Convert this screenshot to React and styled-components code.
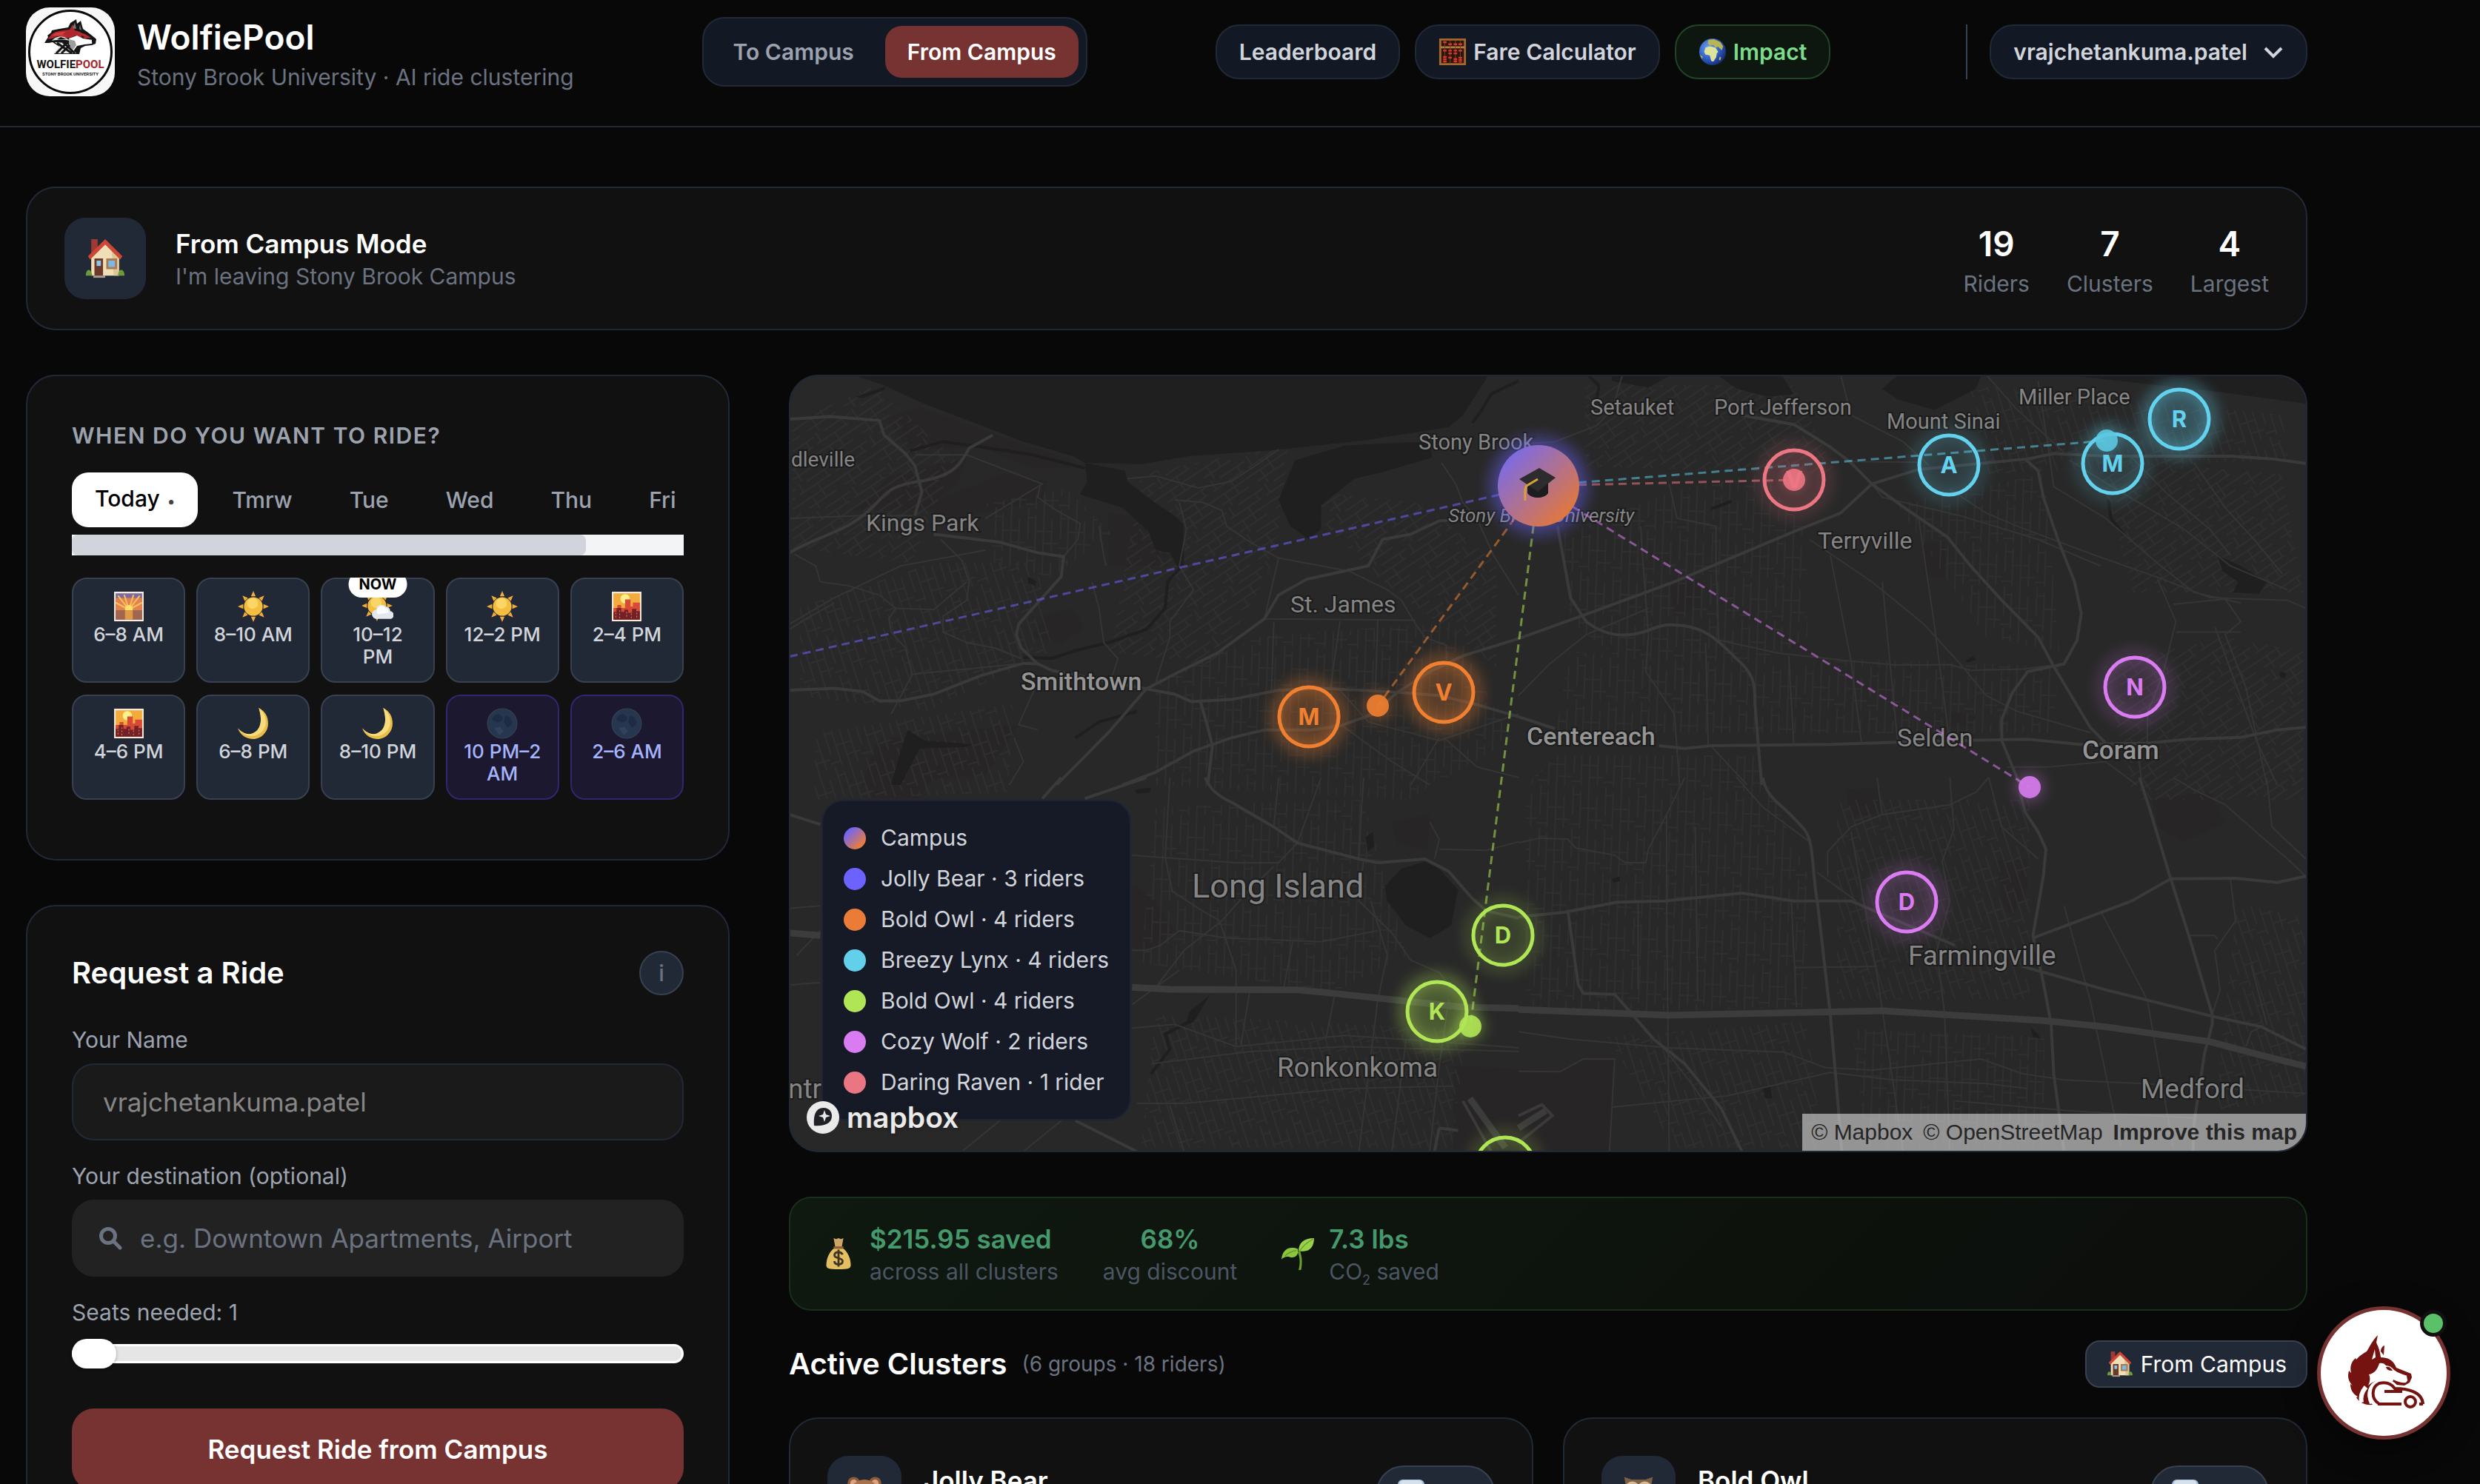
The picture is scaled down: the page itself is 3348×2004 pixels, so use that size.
import React from 'react'
import styled, { createGlobalStyle, css } from 'styled-components'

const GlobalStyle = createGlobalStyle`
	* {
		box-sizing: border-box;
	}
	body {
		margin: 0;
		background: #080808;
		color: #fff;
		font-family: Inter, 'Liberation Sans', sans-serif;
		font-size: 30px;
		line-height: 40px;
	}
	button, input {
		font: inherit;
		color: inherit;
	}
	button {
		cursor: pointer;
	}
	h1, h2, h3, p {
		margin: 0;
		font-size: inherit;
		font-weight: inherit;
	}
`

/* ---------- emoji ---------- */

const EmojiSvg = styled.svg`
	display: block;
	flex: none;
	width: ${props => props.$size}px;
	height: ${props => props.$size}px;
`

const House = () => (
	<>
		<path d="M7 2h6v9l-6 6z" fill="#9c3a33" />
		<path d="M7 18 20 5l13 13v18H7z" fill="#f0dfb6" />
		<path d="M26 12l7 6v18h-5z" fill="#dcc596" />
		<path d="M20 2 4 18l2 3L20 7l14 14 2-3z" fill="#cf4636" />
		<path d="M10 20h8v16h-8z" fill="#6b3a2a" />
		<path d="M12 22h4v5h-4z" fill="#8fc4ea" />
		<path d="M21 20h10v10H21z" fill="#a67b52" />
		<path d="M23 22h6v6h-6z" fill="#7fb6e6" />
		<path d="M2 36c0-7 5-7 6 0zM32 36c0-7 6-7 6 0z" fill="#6c9a3b" />
		<path d="M9 36h11v2H9z" fill="#a89a8c" />
	</>
)

const Abacus = () => (
	<>
		<path d="M1 1h38v38H1z" fill="#2a160c" />
		<path d="M1 1h38v38H1zM4 4v32h32V4z" fill="#a5682c" fillRule="evenodd" />
		<path d="M3 12h34v3H3z" fill="#b87a3a" />
		<path d="M9 4v32M16.500 4v32M24 4v32M31 4v32" stroke="#6e4a30" />
		<path
			d="M9 5v3M16.500 8v3M24 8v3M31 8v3M9 17v3M16.500 17v3M24 17v3M31 17v3M16.500 21v3M24 21v3M9 26v9M31 27v8M16.500 27v3M24 29v6"
			stroke="#e0332a"
			strokeWidth="5"
			strokeDasharray="2.500 0.700"
		/>
	</>
)

const Globe = () => (
	<>
		<defs>
			<radialGradient id="sea" cx=".35" cy=".35" r=".7">
				<stop offset="0" stopColor="#6ea4f2" />
				<stop offset=".6" stopColor="#2e5cc4" />
				<stop offset="1" stopColor="#152c74" />
			</radialGradient>
		</defs>
		<circle cx="20" cy="20" r="19" fill="url(#sea)" />
		<path d="M14 3l8-1 9 4 4 6-2 6-5-5-4 1-3-4-5 1-3-3z" fill="#b9b553" />
		<path d="M10 14l6-2 8 2 4 6-2 2-1 6-4 6-3-1-2-8-6-1-2-4z" fill="#dfe49a" />
		<path d="M30 27l2 1-1 4-2-1zM2 24l4 3-1 3z" fill="#c8b64a" />
	</>
)

const Sunrise = () => (
	<>
		<path d="M1 1h38v38H1z" fill="#f4ecdf" />
		<path d="M3 3h34v34H3z" fill="#7c6a9c" />
		<path d="M3 9h34v16H3z" fill="#e3824a" />
		<path d="M20 24 6 6M20 24 14 5M20 24 26 5M20 24 34 6M20 24 3 15M20 24l17-9" stroke="#f7bf62" strokeWidth="2" />
		<circle cx="20" cy="23" r="5" fill="#ffe169" />
		<path d="M3 25h34v12H3z" fill="#a0664f" />
		<path d="M15 25h10v12H15z" fill="#e09a45" />
	</>
)

const Sun = () => (
	<>
		<path
			d="M20 0l3 7h-6zM20 40l3-7h-6zM0 20l7-3v6zM40 20l-7-3v6zM6 6l7 3-4 4zM34 6l-3 7-4-4zM6 34l3-7 4 4zM34 34l-7-3 4-4z"
			fill="#f3a93a"
		/>
		<circle cx="20" cy="20" r="12" fill="#f5bd3f" />
		<circle cx="19" cy="16" r="7" fill="#fad667" />
	</>
)

const SunCloud = () => (
	<>
		<g transform="translate(-1 -1)">
			<Sun />
		</g>
		<path d="M19 36a6 6 0 0 1-1-12 7 7 0 0 1 12-4 6 6 0 0 1 6 6 5 5 0 0 1-1 10z" fill="#e3e8ee" />
		<path d="M20 30a6 6 0 0 1 10-8 6 6 0 0 1 4 6z" fill="#fafcfd" />
	</>
)

const Sunset = () => (
	<>
		<path d="M1 1h38v38H1z" fill="#f6ead9" />
		<path d="M3 3h34v34H3z" fill="#f3ab3c" />
		<circle cx="18" cy="10" r="6" fill="#fff08a" />
		<path d="M3 22h5v-4h5v4h5V11h7v9h3v-5h9v22H3z" fill="#d84a37" />
		<path d="M3 27h4v-5h6v5h4v-3h5v4h5v-5h6v3h4v11H3z" fill="#73202a" />
		<path d="M6 28v8M11 25v10M20 27v8M26 29v7M33 24v11" stroke="#d9883c" strokeDasharray="2 2" />
	</>
)

const Crescent = () => (
	<>
		<path d="M27 0c8 4 12 11 12 20 0 11-9 20-19 20C11 40 3 35 0 26c5 6 12 9 18 7 10-3 15-14 9-33z" fill="#e8bd4a" />
		<path d="M27 0c6 5 10 12 9 20-1 9-8 15-16 16C12 37 4 33 0 26c5 6 12 9 18 7 10-3 15-14 9-33z" fill="#f6dc7c" />
	</>
)

const NewMoon = () => (
	<>
		<circle cx="20" cy="20" r="19" fill="#26364f" stroke="#39434f" />
		<path d="M8 12c5-6 10-4 12 0s-4 8-8 6-6-2-4-6zM24 10l7 3 2 8-6 4-5-7z" fill="#1d2b44" />
		<path d="M10 26l7-2 5 6-6 5z" fill="#31425f" />
	</>
)

const MoneyBag = () => (
	<>
		<path d="M14 1l3 1 3-1 3 1 3-1-2 11h-8z" fill="#cfa468" />
		<path d="M15 13h10c7 5 10 14 10 21 0 4-3 5-15 5S5 38 5 34c0-7 3-16 10-21z" fill="#e3bf62" />
		<path d="M14 11h12v3H14z" fill="#8d6230" />
		<path
			d="M25 21c-1-2-3-3-5-3-3 0-5 1-5 4 0 4 10 3 10 7 0 3-2 4-5 4s-5-1-5-4M20 15v21"
			fill="none"
			stroke="#3e3423"
			strokeWidth="2.500"
		/>
	</>
)

const Seedling = () => (
	<>
		<path d="M20 18c3 8 3 14 1 22h3c2-9 1-16-1-23z" fill="#6aa02c" />
		<path d="M0 27c1-11 8-17 20-13 2 8-4 12-10 10-4-1-7 0-10 3z" fill="#8cc63f" />
		<path d="M21 17c0-10 6-16 19-16 0 10-5 17-15 16z" fill="#9bd04a" />
		<path d="M22 17c4-6 9-11 17-15M4 23c4-4 8-6 14-7" stroke="#5d9428" fill="none" />
	</>
)

const Bear = () => (
	<>
		<circle cx="8" cy="9" r="7" fill="#8a5a3a" />
		<circle cx="32" cy="9" r="7" fill="#8a5a3a" />
		<circle cx="8" cy="9" r="4" fill="#d9a283" />
		<circle cx="32" cy="9" r="4" fill="#d9a283" />
		<circle cx="20" cy="22" r="17" fill="#a8714a" />
	</>
)

const Owl = () => (
	<>
		<path d="M4 2l8 3h16l8-3-2 12 2 14-6 10H10L4 28l2-14z" fill="#7d5f48" />
		<circle cx="13" cy="15" r="8" fill="#d7b893" />
		<circle cx="27" cy="15" r="8" fill="#d7b893" />
		<circle cx="14" cy="15" r="4" fill="#1c1310" />
		<circle cx="26" cy="15" r="4" fill="#1c1310" />
		<path d="M18 18h4l-2 6z" fill="#e3a53c" />
	</>
)

const Bubble = () => (
	<>
		<rect x="1" y="1" width="38" height="36" rx="7" fill="#a9c0d8" />
		<rect x="4" y="2" width="32" height="12" rx="5" fill="#d5e2ee" />
	</>
)

const drawings = {
	house: House,
	abacus: Abacus,
	globe: Globe,
	sunrise: Sunrise,
	sun: Sun,
	sunCloud: SunCloud,
	sunset: Sunset,
	crescent: Crescent,
	newMoon: NewMoon,
	moneyBag: MoneyBag,
	seedling: Seedling,
	bear: Bear,
	owl: Owl,
	bubble: Bubble,
}

const Emoji = ({ name, size = 38 }) => {
	const Drawing = drawings[name]
	return (
		<EmojiSvg $size={size} viewBox="0 0 40 40" aria-hidden="true">
			<Drawing />
		</EmojiSvg>
	)
}

/* ---------- shell ---------- */

const Page = styled.div`
	height: 100vh;
	overflow: hidden;
`

const Header = styled.header`
	display: flex;
	justify-content: space-between;
	align-items: center;
	padding: 10px 233px 40px 35px;
	border-bottom: 2px solid #222936;
`

const Brand = styled.div`
	display: flex;
	align-items: center;
	gap: 30px;
`

const Logo = styled.svg`
	width: 120px;
	height: 120px;
	border-radius: 32px;
	background: #f7f7f7;
`

const Title = styled.h1`
	font-size: 46px;
	line-height: 68px;
	font-weight: 600;
`

const Muted = styled.p`
	color: ${props => props.$color || '#6b7280'};
	line-height: ${props => props.$line || 40}px;
	white-space: nowrap;
`

const Segment = styled.div`
	display: flex;
	gap: 12px;
	padding: 10px;
	background: #131825;
	border: 2px solid #222936;
	border-radius: 30px;
`

const SegmentButton = styled.button`
	height: 70px;
	padding: 0 30px;
	border: 0;
	border-radius: 22px;
	font-weight: 600;
	background: transparent;
	color: #9ca3af;

	${props =>
		props.$active &&
		css`
			background: #773232;
			color: #fff;
		`};
`

const Nav = styled.nav`
	display: flex;
	gap: 20px;
`

const pill = css`
	display: flex;
	align-items: center;
	gap: 9px;
	border: 2px solid #222936;
	background: #131825;
	color: #d1d5db;
	white-space: nowrap;
`

const NavButton = styled.button`
	${pill};
	height: 74px;
	padding: 0 30px;
	border-radius: 32px;
	font-weight: 600;

	${props =>
		props.$green &&
		css`
			background: #0d170f;
			border-color: #1f4427;
			color: #7bdc8b;
		`};
`

const Account = styled.div`
	display: flex;
	gap: 30px;
	padding-left: 10px;

	&::before {
		content: '';
		width: 2px;
		background: #374151;
	}
`

const Chevron = styled.svg`
	width: 28px;
	height: 28px;
	margin-left: 12px;
	fill: none;
	stroke: currentColor;
	stroke-width: 4;
`

const Main = styled.main`
	display: grid;
	gap: 60px;
	padding: 80px 233px 60px 35px;
`

const card = css`
	background: #111;
	border: 2px solid #222936;
	border-radius: 40px;
`

const ModeCard = styled.section`
	${card};
	display: flex;
	align-items: center;
	gap: 40px;
	padding: 40px 50px;
`

const Tile = styled.div`
	display: flex;
	justify-content: center;
	align-items: center;
	flex: none;
	width: ${props => props.$size}px;
	height: ${props => props.$size}px;
	border-radius: 28px;
	background: #222936;
`

const Name = styled.h3`
	font-size: 35px;
	line-height: 48px;
	font-weight: 600;
	color: ${props => props.$color || '#fff'};
	white-space: nowrap;
`

const Stats = styled.div`
	display: flex;
	gap: 50px;
	margin-left: auto;
	text-align: center;
`

const Columns = styled.div`
	display: grid;
	grid-template-columns: minmax(0, 19fr) minmax(0, 41fr);
	gap: 80px;
	align-items: start;
`

const Stack = styled.div`
	display: grid;
	grid-template-columns: minmax(0, 1fr);
	gap: 60px;
`

const Panel = styled.section`
	${card};
	padding: 60px;
`

/* ---------- schedule ---------- */

const Eyebrow = styled.h2`
	font-weight: 600;
	letter-spacing: 0.05em;
	text-transform: uppercase;
	color: #9ca3af;
	margin-bottom: 30px;
`

const Days = styled.div`
	display: flex;
	gap: 15px;
	overflow: hidden;
`

const Day = styled.button`
	flex: none;
	height: 74px;
	padding: 0 31px;
	border: 0;
	border-radius: 22px;
	font-weight: 500;
	background: transparent;
	color: #9ca3af;

	${props =>
		props.$active &&
		css`
			background: #fff;
			color: #000;
		`};

	small {
		margin-left: 10px;
		font-size: 20px;
		color: #444;
	}
`

const ScrollTrack = styled.div`
	height: 28px;
	margin: 10px 0 30px;
	background: #f3f4f6;
`

const ScrollThumb = styled.div`
	width: 84%;
	height: 100%;
	border-radius: 8px;
	background: #d1d5db;
`

const Slots = styled.div`
	display: grid;
	grid-template-columns: repeat(5, minmax(0, 1fr));
	gap: 16px 15px;
	padding-bottom: 20px;
	overflow: hidden;
`

const Slot = styled.button`
	position: relative;
	display: flex;
	flex-direction: column;
	align-items: center;
	gap: 2px;
	min-height: 142px;
	padding: 16px 20px;
	border: 2px solid #384150;
	border-radius: 20px;
	background: #222936;
	color: #d1d5db;
	font-size: 26px;
	line-height: 30px;
	font-weight: 500;

	${props =>
		props.$night &&
		css`
			background: #1c182f;
			border-color: #2d2870;
			color: #a5b4fc;
		`};
`

const NowBadge = styled.span`
	position: absolute;
	top: -11px;
	left: 50%;
	transform: translateX(-50%);
	padding: 3px 14px;
	border-radius: 18px;
	background: #fff;
	color: #000;
	font-size: 20px;
	font-weight: 700;
`

/* ---------- request form ---------- */

const PanelHead = styled.div`
	display: flex;
	justify-content: space-between;
	align-items: center;
	margin-bottom: 40px;
`

const Heading = styled.h2`
	font-size: 40px;
	line-height: 60px;
	font-weight: 600;
	white-space: nowrap;
`

const InfoButton = styled.button`
	width: 60px;
	height: 60px;
	padding: 0;
	border: 2px solid #384150;
	border-radius: 50%;
	background: #222936;
	color: #6b7280;
	font-weight: 500;
`

const Label = styled.label`
	display: block;
	margin-bottom: 12px;
	color: #9ca3af;
`

const Field = styled.div`
	display: flex;
	align-items: center;
	gap: 24px;
	height: 104px;
	margin-bottom: 28px;
	padding: 0 ${props => (props.$filled ? 34 : 40)}px;
	border: 2px solid ${props => (props.$filled ? '#222' : '#222936')};
	border-radius: 30px;
	background: ${props => (props.$filled ? '#222' : '#1a1a1a')};

	input {
		flex: 1;
		min-width: 0;
		padding: 0;
		border: 0;
		outline: 0;
		background: transparent;
		font-size: 35px;
		color: #868686;
	}
	input::placeholder {
		color: #6b7280;
		opacity: 1;
	}
	svg {
		width: 32px;
		height: 32px;
		fill: none;
		stroke: #6b7280;
		stroke-width: 5;
		stroke-linecap: round;
	}
`

const Range = styled.input`
	appearance: none;
	display: block;
	width: 100%;
	height: 48px;
	margin: 0 0 50px;
	background: transparent;

	&::-webkit-slider-runnable-track {
		height: 26px;
		border: 3px solid #fff;
		border-radius: 13px;
		background: #e5e5e5;
	}
	&::-webkit-slider-thumb {
		appearance: none;
		width: 60px;
		height: 40px;
		margin: -10px 0 0 -3px;
		border-radius: 20px;
		background: #fff;
		box-shadow: 0 1px 4px rgba(0, 0, 0, 0.3);
	}
`

const Submit = styled.button`
	width: 100%;
	height: 110px;
	border: 0;
	border-radius: 30px;
	background: #773232;
	font-size: 35px;
	font-weight: 600;
`

/* ---------- map ---------- */

const MapFrame = styled.section`
	position: relative;
	height: 1050px;
	overflow: hidden;
	border: 2px solid #222936;
	border-radius: 40px;
	background: #282828;
`

const MapSvg = styled.svg`
	display: block;
	width: 100%;
	height: 100%;
	font-family: Roboto, 'Liberation Sans', sans-serif;

	path {
		vector-effect: non-scaling-stroke;
	}
	.road {
		fill: none;
		stroke: #353535;
		stroke-width: 2px;
	}
	.main {
		stroke: #3a3a3a;
		stroke-width: 4px;
	}
	.highway {
		stroke: #3c3c3c;
		stroke-width: 9px;
	}
	.water {
		fill: #1f1f1f;
	}
	.river {
		fill: none;
		stroke: #1f1f1f;
		stroke-width: 4px;
	}
	.park {
		fill: #282526;
	}
	.label {
		paint-order: stroke;
		stroke: #1c1c1c;
		stroke-width: 4px;
		fill: #858585;
	}
	.town {
		fill: #959595;
		font-weight: 500;
	}
`

const Legend = styled.ul`
	position: absolute;
	left: 42px;
	bottom: 41px;
	display: grid;
	gap: 20px;
	margin: 0;
	padding: 32px 28px;
	border: 2px solid #1f2433;
	border-radius: 30px;
	background: #161a26;
	list-style: none;
	line-height: 35px;
	color: #d1d5db;

	li {
		display: flex;
		align-items: center;
		gap: 20px;
	}
`

const Swatch = styled.span`
	width: 30px;
	height: 30px;
	border-radius: 50%;
	background: ${props => props.$color};
`

const MapLogo = styled.div`
	position: absolute;
	left: 21px;
	bottom: 22px;
	display: flex;
	align-items: center;
	gap: 9px;
	font-size: 39px;
	line-height: 44px;
	font-weight: 600;
	color: #eaeaea;
	text-shadow: 0 0 4px #222, 0 0 4px #222;

	svg {
		width: 46px;
		height: 46px;
	}
`

const Attribution = styled.div`
	position: absolute;
	right: 0;
	bottom: 0;
	display: flex;
	gap: 14px;
	height: 50px;
	padding: 0 12px;
	background: rgba(255, 255, 255, 0.5);
	font-family: 'Liberation Sans', sans-serif;
	line-height: 50px;

	a {
		color: #262626;
		text-decoration: none;
		white-space: nowrap;
	}
	a:last-child {
		font-weight: 700;
	}
`

// every quarter of the map is traced on its own tile grid
const tiles = [
	{
		transform: 'translate(1050 500) scale(.6378 .3571)',
		park: [
			'M230 180 300 140 440 230 620 340 620 370 540 370 430 290 280 300Z',
			'M480 390 570 420 560 490 380 560 300 520Z',
			'M160 530 240 400 400 330 380 430 300 530Z',
			'M700 540 770 560 790 660 830 700 820 740 700 740Z',
			'M210 1400 510 1340 440 1530 180 1568Z',
			'M560 930 620 900 650 970 600 1030 540 1010Z',
		],
		water: [
			'M160 0 160 17 230 60 300 120 440 215 520 270 625 325 650 350 770 355 870 325 1060 300 1240 265 1420 215 1450 170 1505 17V0Z',
			'M1095 340 1200 285 1300 275 1380 270 1385 330 1280 385 1220 410 1150 510 1150 600 1125 640 1085 590 1060 490Z',
			'M650 350 735 380 740 420 790 490 840 550 858 580 860 740 845 740 830 690 800 680 785 610 730 520 640 470 655 420Z',
			'M240 1568 260 1440 275 1360 310 1400 410 1415 400 1425 300 1430 260 1568Z',
			'M165 100 230 60 225 75 180 105ZM530 780 548 800 545 815 530 805Z',
		],
		river: [
			'M855 740 825 800 820 900 780 980 700 1030 630 1060 580 1090 520 1085',
			'M280 305 350 270 430 290 540 320 650 370',
			'M630 1390 680 1330 760 1290 M1568 40 1510 90 1490 150 1470 200',
		],
		road: [
			'M555 440 550 480 590 530 640 580 635 640 605 705',
			'M25 560 170 550 285 550 M290 320 400 320 560 430 440 560',
			'M345 640 390 720 405 800 400 870 350 930 350 990 400 1030 460 1050 515 1090',
			'M35 695 80 740 90 800 150 815 215 850 250 900 235 940 240 990 270 1050 285 1150 240 1300',
			'M850 500 865 600 850 740 880 830 830 950 830 1010 800 1180',
			'M840 490 900 500 940 530 950 590 1000 650 1060 710 1150 740 1210 760 1290 830 1320 870 1350 960 1370 1010 1415 1040 1415 1100',
			'M1060 710 1030 940 1350 945 M665 800 680 900 690 1030 720 1090 700 1200',
			'M1190 950 1170 1200 M1270 945 1265 1210 M1050 950 1045 1210',
			'M1405 350 1435 430 1450 500 1480 560 1515 700 1568 850',
			'M680 590 690 700 695 740 M740 410 800 400 890 445 960 420 1020 350 1060 300',
			'M25 960 120 860 260 740 440 680 M250 900 330 905 400 800',
			'M280 1150 400 1130 520 1108 M500 1390 520 1480 490 1568 M550 1360 510 1340 530 1260 550 1180',
			'M1195 1345 1300 1480 1380 1568 M1400 1390 1340 1568 M1410 1390 1480 1500 1568 1540',
			'M1190 1210 1250 1330 1400 1400 1568 1300 M25 980 60 940 120 880',
		],
		main: [
			'M25 690C80 630 130 620 180 550S220 440 300 420 390 340 405 295L455 245',
			'M25 185 110 175 215 190 225 245 270 315 290 360 305 460 290 550',
			'M330 620 400 635 470 650 550 690 605 705 600 780 555 870 510 960 505 1000 515 1050 550 1110 580 1135',
			'M25 1210 120 1203 180 1215 215 1250 260 1250 330 1225 430 1155 520 1108 550 1110',
			'M780 1205 840 1225 875 1253 960 1245 1060 1210 1150 1203 1290 1215 1400 1230 1470 1260 1568 1310',
			'M730 1568 800 1520 880 1440 960 1390 1030 1360 1130 1360 1190 1345 1260 1300 1310 1220 1380 1140 1450 1080 1568 1015',
			'M590 1568 700 1370 780 1205 850 1140 930 1070 1030 940 1060 850 1120 790 1250 740 1280 640 1340 620 1400 570 1480 560',
			'M895 1253 910 1350 920 1420 910 1568 M580 1135 780 1205',
		],
		highway: [],
	},
	{
		transform: 'translate(2050 500) scale(.7015 .3571)',
		park: [
			'M290 800 350 790 350 900 300 930Z',
			'M830 1290 880 1310 870 1350 830 1340Z',
			'M780 650 820 650 820 780 780 780Z',
		],
		water: [
			'M180 0H310L250 65 180 40ZM370 0H500L530 90 480 100 420 70ZM700 70 730 17V0H895L880 70 800 150 730 110Z',
			'M1050 17V0H1530V130L1340 80 1200 50Z',
			'M1345 700 1390 740 1440 800 1425 845 1375 840 1385 800 1355 760Z',
			'M1465 1140 1478 1145 1475 1165 1465 1160ZM860 1100 875 1080 880 1095 865 1105Z',
		],
		river: ['M135 20 155 60 150 110', 'M370 525 410 495 M1135 490 1140 560 1165 620'],
		road: [
			'M0 280 70 270 150 210 180 150 200 17 M640 345 770 348',
			'M830 450 900 540 960 590 1110 700 1240 790 1330 860 1480 870 1515 900',
			'M1000 40 1020 300 1030 440 1130 560 1230 730 1300 840 1390 880',
			'M290 430 305 560 380 590 380 730 385 1020 500 1070 640 1100 730 1115 830 1113 870 1135 970 1130 1050 1110',
			'M1060 340 1150 450 1280 600 1370 740 1480 830',
			'M1230 790 1265 950 1240 1150 1210 1300 1210 1410',
			'M1260 885 1360 865 1390 950 1360 1000 1400 1200 1440 1568 M1265 990 1390 990',
			'M235 590 240 740 250 1000 245 1140 300 1300 310 1568 M360 1030 365 1420 M520 1080 530 1420',
			'M600 700 620 900 640 1100 660 1410 M560 640 680 800 780 960 850 1110 900 1230 960 1290 1100 1370',
			'M700 800 715 1110 730 1410 M770 560 800 960 830 1410 M0 1230 60 1110 130 1000 250 900',
			'M680 430 700 480 850 550 1000 640 1120 740 M1180 330 1250 470 1330 600 1370 700',
			'M1300 350 1360 520 1420 650 1470 770 M1340 970 1420 1400 1460 1568',
			'M370 1420 440 1568 M940 1500 1020 1500 1130 1480 1190 1568 M1190 1410 1200 1568',
			'M620 17 640 170 740 270 790 360 M900 17 960 150 1050 310',
		],
		main: [
			'M0 1015 120 930 300 800 530 610 620 540 680 430 770 375 850 360 980 335 1030 315 1130 325 1370 325 1450 335 1515 352',
			'M75 590 90 750 100 860 130 950Q170 1010 215 1000C260 990 260 960 300 963 370 965 400 1060 430 1110 455 1160 455 1200 455 1260L462 1430 468 1568',
			'M975 335 1000 380 1010 480 1040 650 1070 800 1083 920 1075 1020 1050 1110 980 1140 950 1220 930 1320 930 1400 965 1568',
			'M0 1310 70 1355 M270 1420 320 1430 370 1420 600 1415 780 1403 980 1395 1080 1415 1210 1410 1290 1395 1390 1388 1460 1360 1515 1350',
			'M430 170 530 205 600 290 640 350 680 430 750 530 825 630 870 740 930 870 1000 1010 1030 1120 1100 1350 1130 1410',
		],
		highway: [],
	},
	{
		transform: 'translate(1050 1050) scale(.6378 .3333)',
		park: [
			'M750 430 800 500 840 620 790 700 750 690Z',
			'M1300 180 1380 150 1375 290 1310 270Z',
			'M1430 1170 1568 1180 1568 1515 1430 1515Z',
			'M180 0 330 0 300 85 200 85Z',
		],
		water: [
			'M1320 370 1370 340 1400 370 1440 455 1425 600 1380 650 1330 600 1290 500 1285 440Z',
			'M1245 240 1260 220 1262 280 1248 300ZM755 50 790 40 788 60 760 65ZM870 950 915 880 880 990 865 1000Z',
		],
		river: ['M880 980 820 1040 830 1100 790 1200'],
		road: [
			'M750 315 820 325 970 345 1060 345 1100 265 M820 325 835 460 890 530 935 580 970 780 970 1090',
			'M800 850 860 700 940 580 1000 450 1050 360 M750 920 850 780',
			'M750 700 780 700 810 680 850 620 950 650 1150 665 1270 620',
			'M750 1015 840 1000 970 1090 1200 1045 1400 1070 1568 1095',
			'M790 1160 1000 1110 1200 1090 1568 1110 M760 1320 860 1320 1200 1260 1430 1250',
			'M1240 330 1230 500 1300 630 1340 740 1400 790 1430 860 M1255 500 1290 720 1270 900 1230 1515',
			'M1400 290 1500 295 1568 260 M1380 180 1400 250 1390 330 M1240 0 1235 150 1230 330',
			'M1000 850 980 1090 M1090 665 1070 860 M1180 870 1160 1060 M1330 1060 1300 1515 M830 1330 860 1515',
			'M1420 900 1400 1170 1380 1515 M1060 0 1050 200 M830 0 820 325 M1150 0 1100 265',
			'M25 840 90 830 M25 530 90 520 M40 720 90 620 M520 1515 600 1390 M390 1515 470 1390',
		],
		main: [
			'M905 0Q915 60 960 100L1050 200 1100 265 1230 330 1270 345 1370 330 1420 380 1470 490 1500 540 1568 570',
			'M600 0 560 85 M780 0 650 85 M25 150 90 190 M630 1390 760 1515',
			'M1400 1420 1390 1515 M1400 1420 1440 1430 M1450 1310 1510 1515',
		],
		highway: ['M25 630 90 640 M750 850 830 858 1100 860 1180 875 1350 910 1450 930 1568 935', 'M1465 1300 1540 1500'],
	},
	{
		transform: 'translate(2050 1050) scale(.7015 .3333)',
		park: [
			'M0 1190 80 1192 125 1140 185 1140 175 1515 0 1515Z',
			'M920 340 980 330 980 440 950 560 930 500Z',
			'M1220 90 1330 60 1360 180 1280 260 1230 200Z',
			'M630 50 690 40 700 140 640 160Z',
		],
		water: ['M470 1260 485 1250 488 1300 475 1300ZM985 1010 1000 1040 1005 1060 990 1050ZM180 410 195 400 195 420 182 425Z'],
		river: [],
		road: [
			'M595 400 595 300 640 200 700 150 830 110 880 60 905 0 M575 385 650 500',
			'M0 1030 100 1060 290 1095 510 1112 590 1175 680 1185 890 1140 970 1200 1050 1225 1200 1240 1515 1280',
			'M180 1335 400 1290 600 1195 720 1225 900 1240 980 1260',
			'M320 0 285 150 285 500 290 1515 M0 265 40 245 95 250 110 285 185 315 205 345 245 345 250 290 285 150',
			'M830 0 838 210 815 340 830 500 805 700 820 960 830 1515 M690 0 700 150',
			'M640 220 690 800 720 1225 740 1515 M1260 0 1300 50 1360 110 1430 240 1480 330 1515 400',
			'M1370 410 1380 580 1340 700 1350 860 1335 960 M0 1190 80 1192 125 1140 185 1140 175 1515',
			'M525 500 535 930 M420 0 470 120 560 260 M340 200 345 900 M230 510 230 860 M530 770 690 765',
			'M1050 520 1100 900 1160 1500 M1120 540 1210 900 1260 1500 M905 0 930 200 1000 330',
			'M1440 0 1450 200 1515 330 M1290 640 1340 640 1345 655 M1410 760 1440 1000 M1400 1090 1410 1030 1430 1010',
			'M270 1070 340 1260 390 1415 M840 1310 1060 1350 1300 1380',
		],
		main: [
			'M0 565 90 545 190 505 280 500 430 468 530 500 640 500 690 545 840 680',
			'M470 0Q475 60 500 105T550 210C570 260 565 400 575 500L600 960 612 1250 622 1515',
			'M965 60 975 140 1000 220 1015 290 1010 400 990 640 1010 830 1025 1000 1030 1200 1050 1515',
			'M1195 0 1215 130 1255 410 1290 640 1335 960 1335 1000 1320 1120 1300 1400 1298 1515',
			'M970 765 1130 860 1340 970 1430 1010 1515 1100 M990 650 1180 500 1255 410 1380 408 1460 425 1515 400',
			'M95 540 115 840 125 875 185 878 215 950 260 1060 320 1160 390 1340 430 1515',
			'M0 1370 45 1325 65 1370 0 1480',
		],
		highway: ['M0 940 290 963 700 945 1010 985 1130 1010 1330 1070 1420 1120 1515 1170', 'M0 1420 52 1350'],
	},
]

// residential blocks: [points, street grid]
const blocks = [
	['1070,570 1180,520 1290,620 1230,760 1070,740', 1],
	['1080,820 1260,760 1400,760 1420,880 1250,960 1080,940', 2],
	['1330,680 1440,660 1500,720 1420,780 1340,760', 0],
	['1540,640 1740,600 1720,760 1640,900 1500,880', 1],
	['1560,920 1700,860 1960,840 2040,1000 1900,1080 1560,1060', 0],
	['1100,990 1370,950 1360,1070 1100,1080', 2],
	['1560,1090 1840,1080 1900,1290 1800,1340 1540,1300', 0],
	['1560,1370 1980,1390 1960,1550 1540,1550', 2],
	['1740,660 1920,680 2020,760 2020,900 1860,780', 1],
	['2110,720 2270,660 2380,640 2440,720 2440,860 2280,960 2120,840', 0],
	['2120,880 2370,900 2520,890 2780,900 2770,990 2100,990', 0],
	['2100,1020 2370,1020 2440,1180 2440,1360 2060,1370 2060,1060', 0],
	['2480,1080 2740,1080 2740,1350 2480,1350', 2],
	['2560,680 2760,640 2780,880 2680,860', 0],
	['2830,620 3080,640 3110,800 2880,800', 1],
	['2840,900 3000,860 3110,880 3110,1080 2880,1080', 1],
	['2170,1400 2440,1380 2460,1550 2260,1550', 2],
	['2500,1390 2760,1400 2760,1550 2520,1550', 0],
	['3020,1220 3112,1240 3112,1480 2990,1500', 2],
	['2140,520 2420,520 2480,640 2140,630', 1],
	['2660,520 3080,560 3090,620 2680,640', 2],
]

const places = [
	['dleville', 1068, 630, 28],
	['Kings Park', 1169, 717, 32],
	['Stony Brook', 1915, 607, 29],
	['St. James', 1742, 827, 32],
	['Smithtown', 1378, 932, 34, 'town'],
	['Setauket', 2147, 560, 29],
	['Port Jefferson', 2314, 560, 29],
	['Mount Sinai', 2547, 579, 29],
	['Miller Place', 2725, 546, 29],
	['Terryville', 2454, 741, 32],
	['Centereach', 2061, 1006, 34, 'town'],
	['Selden', 2561, 1008, 34],
	['Coram', 2811, 1025, 35, 'town'],
	['Long Island', 1609, 1212, 45],
	['Ronkonkoma', 1724, 1454, 37],
	['Farmingville', 2576, 1303, 37],
	['Medford', 2890, 1483, 37],
	['ntr', 1064, 1483, 37],
]

const routes = [
	[1060, 888, '#6c63ff'],
	[1860, 953, '#f08030'],
	[2844, 595, '#5bc8e0'],
	[2422, 648, '#ed7683'],
	[1985, 1386, '#b0e655'],
	[2740, 1063, '#d87cf0'],
]

// [initial, x, y, color, riders at the spot]
const riders = [
	['M', 1767, 968, '#f08030', 2],
	['V', 1949, 935, '#f08030', 2],
	['V', 2422, 648, '#ed7683', 1],
	['A', 2631, 628, '#62d2ee', 1],
	['M', 2852, 626, '#62d2ee', 1],
	['R', 2942, 566, '#62d2ee', 2],
	['N', 2882, 928, '#db7cf3', 1],
	['D', 2574, 1218, '#db7cf3', 1],
	['D', 2029, 1263, '#b0e655', 1],
	['K', 1940, 1366, '#b0e655', 2],
	['', 2032, 1576, '#b0e655', 1],
]

const RideMap = () => (
	<MapSvg viewBox="1067 508 2046 1046" preserveAspectRatio="xMidYMid slice" role="img" aria-label="Rider map">
		<defs>
			{[8, 62, -12].map((angle, i) => (
				<pattern
					key={angle}
					id={`grid${i}`}
					width="44"
					height="58"
					patternUnits="userSpaceOnUse"
					patternTransform={`rotate(${angle - 6})`}
				>
					<path d="M4 0v40M14 8v50M25 0v58M36 14v44M4 12h10M14 30h22M25 46h19M0 52h14" fill="none" stroke="#2f2f2f" strokeWidth="2" />
				</pattern>
			))}
			<linearGradient id="campus" x1="0" y1="0" x2="1" y2="1">
				<stop offset=".15" stopColor="#7f6be0" />
				<stop offset=".85" stopColor="#e0773f" />
			</linearGradient>
			<filter id="glow" x="-60%" y="-60%" width="220%" height="220%">
				<feGaussianBlur stdDeviation="10" />
			</filter>
		</defs>

		{tiles.map(tile => (
			<g key={tile.transform} transform={tile.transform}>
				{tile.park.map(d => (
					<path key={d} className="park" d={d} />
				))}
			</g>
		))}
		{blocks.map(([points, grid]) => (
			<polygon key={points} points={points} fill={`url(#grid${grid})`} />
		))}
		{tiles.map(tile => (
			<g key={tile.transform} transform={tile.transform}>
				{tile.water.map(d => (
					<path key={d} className="water" d={d} />
				))}
				{tile.river.map(d => (
					<path key={d} className="river" d={d} />
				))}
				{tile.road.map(d => (
					<path key={d} className="road" d={d} />
				))}
				{tile.main.map(d => (
					<path key={d} className="road main" d={d} />
				))}
				{tile.highway.map(d => (
					<path key={d} className="road highway" d={d} />
				))}
			</g>
		))}

		{places.map(([text, x, y, size, kind]) => (
			<text key={text} className={kind ? `label ${kind}` : 'label'} x={x} y={y} fontSize={size}>
				{text}
			</text>
		))}
		<text className="label" x="1955" y="705" fontSize="26" fontStyle="italic">
			Stony Brook University
		</text>

		{routes.map(([x, y, color]) => (
			<line key={color} x1="2077" y1="656" x2={x} y2={y} stroke={color} strokeWidth="3" strokeDasharray="11 7" opacity=".55" />
		))}
		{riders.map(([letter, x, y, color, count]) => (
			<g key={x}>
				<circle cx={x} cy={y} r="44" fill="none" stroke={color} strokeWidth="10" opacity={count * 0.3} filter="url(#glow)" />
				<circle cx={x} cy={y} r="40" fill={color} fillOpacity={count * 0.13} stroke={color} strokeWidth="5" />
				{letter && (
					<text
						x={x}
						y={y + 11}
						fontSize="31"
						fontWeight="700"
						fontFamily="Inter, sans-serif"
						fill={color}
						textAnchor="middle"
					>
						{letter}
					</text>
				)}
			</g>
		))}
		{routes.slice(1).map(([x, y, color]) => (
			<g key={color}>
				<circle cx={x} cy={y} r="18" fill={color} opacity=".4" filter="url(#glow)" />
				<circle cx={x} cy={y} r="15" fill={color} opacity=".9" />
			</g>
		))}

		<circle cx="2077" cy="656" r="66" fill="#6c63ff" opacity=".45" filter="url(#glow)" />
		<circle cx="2077" cy="656" r="55" fill="url(#campus)" />
		<path d="M2062 652v14c6 8 22 8 28 0v-14z" fill="#1d1d1f" />
		<path d="M2051 647l27-15 22 13-24 19z" fill="#2c2c2f" />
		<path d="M2076 647l-15 9c-3 3-2 8-2 20" fill="none" stroke="#d9a035" strokeWidth="3" />
	</MapSvg>
)

const legend = [
	['Campus', 'linear-gradient(135deg, #6c63ff 15%, #f08030 85%)'],
	['Jolly Bear · 3 riders', '#6c63ff'],
	['Bold Owl · 4 riders', '#ea7c38'],
	['Breezy Lynx · 4 riders', '#62d0ea'],
	['Bold Owl · 4 riders', '#b0e655'],
	['Cozy Wolf · 2 riders', '#d97cf2'],
	['Daring Raven · 1 rider', '#ea7683'],
]

/* ---------- savings and clusters ---------- */

const Savings = styled.section`
	display: flex;
	align-items: center;
	gap: 60px;
	height: 154px;
	margin-top: 60px;
	padding: 0 43px;
	border: 2px solid #1a2e1c;
	border-radius: 30px;
	background: linear-gradient(135deg, #0f1910, #0c0e0b);
`

const Saving = styled.div`
	display: flex;
	align-items: center;
	gap: 20px;
	text-align: ${props => (props.$center ? 'center' : 'left')};

	sub {
		font-size: 18px;
		line-height: 0;
	}
`

const ClustersHead = styled.div`
	display: flex;
	align-items: center;
	gap: 20px;
	margin: 40px 0;
`

const Count = styled(Muted)`
	font-size: 28px;
`

const ModePill = styled.span`
	${pill};
	height: 64px;
	margin-left: auto;
	padding: 0 26px;
	border-color: #384150;
	border-radius: 20px;
	background: #222936;
	color: #fff;
`

const ClusterGrid = styled.div`
	display: grid;
	grid-template-columns: 1fr 1fr;
	gap: 40px;
`

const ClusterCard = styled.article`
	${card};
	display: flex;
	align-items: center;
	gap: 30px;
	padding: 50px;
`

const ChatLink = styled.button`
	${pill};
	height: 74px;
	margin-left: auto;
	padding: 0 26px;
	border-color: #384150;
	border-radius: 37px;
	background: #222936;
	font-size: 26px;
`

const ChatButton = styled.button`
	position: fixed;
	right: 40px;
	bottom: 60px;
	width: 180px;
	height: 180px;
	padding: 0;
	border: 5px solid #773232;
	border-radius: 50%;
	background: #fff;
	box-shadow: 0 10px 40px rgba(0, 0, 0, 0.5);

	svg {
		display: block;
		width: 100%;
		height: 100%;
	}
`

const OnlineDot = styled.span`
	position: absolute;
	top: 0;
	right: 0;
	width: 36px;
	height: 36px;
	border: 5px solid #111;
	border-radius: 50%;
	background: #5bc168;
`

const BrandLogo = () => (
	<Logo viewBox="0 0 120 120" role="img" aria-label="WolfiePool Stony Brook University">
		<circle cx="60" cy="60" r="55.500" fill="#fff" stroke="#0a0a0a" strokeWidth="3" />
		<path
			d="M25 48l5-8-1-2 5-4 1-3 10-2 12-2 3-6 8-5 1 6 5-4 3 11 7 5 9 7 2 2-1 6-5 2-9 1-6 3-2 8H38l7-10-9-6-5 1z"
			fill="#151515"
		/>
		<path d="M29 43l6-7 5-3 10-2 9-1 4-7 3 8 7 2 8 5-6 3-8-3-7 3-10 1-7-3-8 3z" fill="#ad262b" />
		<path d="M35 38c6-5 12-5 19-5l-5 4 8 2-12-1z" fill="#cf3d3d" />
		<path d="M63 28l3-8 2 9zM72 29l1-6 2 8z" fill="#777" />
		<path d="M68 33l12 3 8 5-8 1-9-5z" fill="#b42b2f" />
		<path d="M58 42l11-4 8 4 13 2-1 5-10 1-10 2-5 7-5-8z" fill="#fff" />
		<path d="M58 43l8 2 2 6-5 7-5-8z" fill="#9d9d9d" />
		<path d="M35 45c4-5 10-7 17-5l8 5c-8-2-16-2-25 0z" fill="#d9d9d9" />
		<path d="M42 43l5-3 8 3z" fill="#151515" />
		<path d="M38 62l7-10-6-5 15 1 14 14z" fill="#e4e4e4" />
		<path d="M41 62l15-15M48 62l11-11M42 48l20 14M50 47l16 15" stroke="#151515" strokeWidth="3" fill="none" />
		<path d="M75 38l4 2-4 0zM89 43l5 1-1 4-4-1z" fill="#151515" />
		<g fontFamily="Roboto, sans-serif" fontWeight="700">
			<text x="60" y="82" fontSize="15" fill="#151515" textAnchor="middle">
				WOLFIE
				<tspan fill="#a5242a">POOL</tspan>
			</text>
			<text x="60" y="92" fontSize="6" fill="#222" textAnchor="middle">
				STONY BROOK UNIVERSITY
			</text>
		</g>
	</Logo>
)

const Husky = () => (
	<svg viewBox="0 0 170 170" aria-hidden="true">
		<g transform="translate(-5 -5)" fill="#74130f">
			<path d="M80 49c3 6 5 12 6 20 9 0 17 3 21 14l20 8 1 5-3 7-7 4-12-1-12-4c-12-1-20 4-24 12-3 7-1 13 5 19-10 1-18-3-22-10l2-1c-7-4-10-10-10-17l3 2c-6-6-7-12-5-20l3 3c-2-8 0-15 6-20l1 2c4-5 9-8 14-11 4-6 7-14 15-22z" />
			<path d="M91 53l-1 13-4-5c0-4 2-7 5-8z" />
			<path d="M78 58l1 11-5 3z" fill="#fff" />
			<path
				d="M84 77c4-1 7 0 9 3 4 0 8 2 11 6 5 4 12 6 18 8l2 4-4 5c-5 1-11-1-17-4 0 3-3 4-6 2-10-4-20-1-28 6 3-6 3-11 1-15 7-1 12-7 14-15z"
				fill="#fff"
			/>
			<path d="M93 82c4-1 7 1 9 5-5 0-8-1-9-5zM121 94l6-2-1 6-4 2z" />
			<path
				d="M60 130c-2-9 1-15 6-21M74 131c-6-14-2-24 9-29 8-3 18 0 24 8M86 131c-11-3-12-20-1-26 8-2 14 1 17 7h18c10 0 21 5 22 18M86 131h28M136 131h7"
				fill="none"
				stroke="#fff"
				strokeWidth="6"
			/>
			<path
				d="M83 131c-10-6-10-22 1-27 8-2 16 0 21 7 16 0 37 4 38 21M91 115h24M82 132h32M138 132h5"
				fill="none"
				stroke="#74130f"
				strokeWidth="4"
			/>
			<circle cx="126" cy="129" r="7" fill="#fff" stroke="#74130f" strokeWidth="4" />
		</g>
	</svg>
)

const days = ['Tmrw', 'Tue', 'Wed', 'Thu', 'Fri']

const slots = [
	['sunrise', '6–8 AM'],
	['sun', '8–10 AM'],
	['sunCloud', '10–12 PM', 'now'],
	['sun', '12–2 PM'],
	['sunset', '2–4 PM'],
	['sunset', '4–6 PM'],
	['crescent', '6–8 PM'],
	['crescent', '8–10 PM'],
	['newMoon', '10 PM–2 AM', 'night'],
	['newMoon', '2–6 AM', 'night'],
]

const stats = [
	['19', 'Riders'],
	['7', 'Clusters'],
	['4', 'Largest'],
]

const clusters = [
	['bear', 'Jolly Bear', '3 riders'],
	['owl', 'Bold Owl', '4 riders'],
]

const App = () => (
	<Page>
		<GlobalStyle />
		<Header>
			<Brand>
				<BrandLogo />
				<div>
					<Title>WolfiePool</Title>
					<Muted>Stony Brook University · AI ride clustering</Muted>
				</div>
			</Brand>
			<Segment>
				<SegmentButton>To Campus</SegmentButton>
				<SegmentButton $active>From Campus</SegmentButton>
			</Segment>
			<Nav>
				<NavButton>Leaderboard</NavButton>
				<NavButton>
					<Emoji name="abacus" />
					Fare Calculator
				</NavButton>
				<NavButton $green>
					<Emoji name="globe" />
					Impact
				</NavButton>
			</Nav>
			<Account>
				<NavButton>
					vrajchetankuma.patel
					<Chevron viewBox="0 0 28 28">
						<path d="M3 9l11 11L25 9" />
					</Chevron>
				</NavButton>
			</Account>
		</Header>

		<Main>
			<ModeCard>
				<Tile $size={110}>
					<Emoji name="house" size={58} />
				</Tile>
				<div>
					<Name>From Campus Mode</Name>
					<Muted>I'm leaving Stony Brook Campus</Muted>
				</div>
				<Stats>
					{stats.map(([value, label]) => (
						<div key={label}>
							<Title as="p">{value}</Title>
							<Muted>{label}</Muted>
						</div>
					))}
				</Stats>
			</ModeCard>

			<Columns>
				<Stack>
					<Panel>
						<Eyebrow>When do you want to ride?</Eyebrow>
						<Days>
							<Day $active>
								Today<small>•</small>
							</Day>
							{days.map(day => (
								<Day key={day}>{day}</Day>
							))}
						</Days>
						<ScrollTrack>
							<ScrollThumb />
						</ScrollTrack>
						<Slots>
							{slots.map(([icon, label, kind]) => (
								<Slot key={label} $night={kind === 'night'}>
									<Emoji name={icon} size={42} />
									{label}
									{kind === 'now' && <NowBadge>NOW</NowBadge>}
								</Slot>
							))}
						</Slots>
					</Panel>

					<Panel>
						<PanelHead>
							<Heading>Request a Ride</Heading>
							<InfoButton aria-label="About ride requests">i</InfoButton>
						</PanelHead>
						<Label htmlFor="name">Your Name</Label>
						<Field>
							<input id="name" defaultValue="vrajchetankuma.patel" />
						</Field>
						<Label htmlFor="destination">Your destination (optional)</Label>
						<Field $filled>
							<svg viewBox="0 0 32 32" aria-hidden="true">
								<circle cx="13" cy="13" r="9.500" />
								<path d="M20 20l9 9" />
							</svg>
							<input id="destination" placeholder="e.g. Downtown Apartments, Airport" />
						</Field>
						<Label htmlFor="seats">Seats needed: 1</Label>
						<Range id="seats" type="range" min="1" max="4" defaultValue="1" />
						<Submit>Request Ride from Campus</Submit>
					</Panel>
				</Stack>

				<div>
					<MapFrame>
						<RideMap />
						<Legend>
							{legend.map(([text, color], i) => (
								<li key={i}>
									<Swatch $color={color} />
									{text}
								</li>
							))}
						</Legend>
						<MapLogo>
							<svg viewBox="0 0 46 46" aria-hidden="true">
								<circle cx="23" cy="23" r="22" fill="#eaeaea" />
								<path d="M11 34c-1-12 1-24 13-24 7 0 11 5 11 11 0 11-12 14-24 13z" fill="#1f2126" />
								<path d="M25 13l2 6 6 2-6 2-2 6-2-6-6-2 6-2z" fill="#eaeaea" />
							</svg>
							mapbox
						</MapLogo>
						<Attribution>
							<a href="#mapbox">© Mapbox</a>
							<a href="#osm">© OpenStreetMap</a>
							<a href="#improve">Improve this map</a>
						</Attribution>
					</MapFrame>

					<Savings>
						<Saving>
							<Emoji name="moneyBag" size={44} />
							<div>
								<Name $color="#45996d">$215.95 saved</Name>
								<Muted $color="#4b5563">across all clusters</Muted>
							</div>
						</Saving>
						<Saving $center>
							<div>
								<Name $color="#45996d">68%</Name>
								<Muted $color="#4b5563">avg discount</Muted>
							</div>
						</Saving>
						<Saving>
							<Emoji name="seedling" size={44} />
							<div>
								<Name $color="#45996d">7.3 lbs</Name>
								<Muted $color="#4b5563">
									CO<sub>2</sub> saved
								</Muted>
							</div>
						</Saving>
					</Savings>

					<ClustersHead>
						<Heading>Active Clusters</Heading>
						<Count>(6 groups · 18 riders)</Count>
						<ModePill>
							<Emoji name="house" />
							From Campus
						</ModePill>
					</ClustersHead>

					<ClusterGrid>
						{clusters.map(([icon, name, size]) => (
							<ClusterCard key={name}>
								<Tile $size={100}>
									<Emoji name={icon} size={48} />
								</Tile>
								<div>
									<Name>{name}</Name>
									<Muted $line={34}>{size}</Muted>
								</div>
								<ChatLink>
									<Emoji name="bubble" />
									Chat
								</ChatLink>
							</ClusterCard>
						))}
					</ClusterGrid>
				</div>
			</Columns>
		</Main>

		<ChatButton aria-label="Open chat">
			<Husky />
			<OnlineDot />
		</ChatButton>
	</Page>
)

export default App
